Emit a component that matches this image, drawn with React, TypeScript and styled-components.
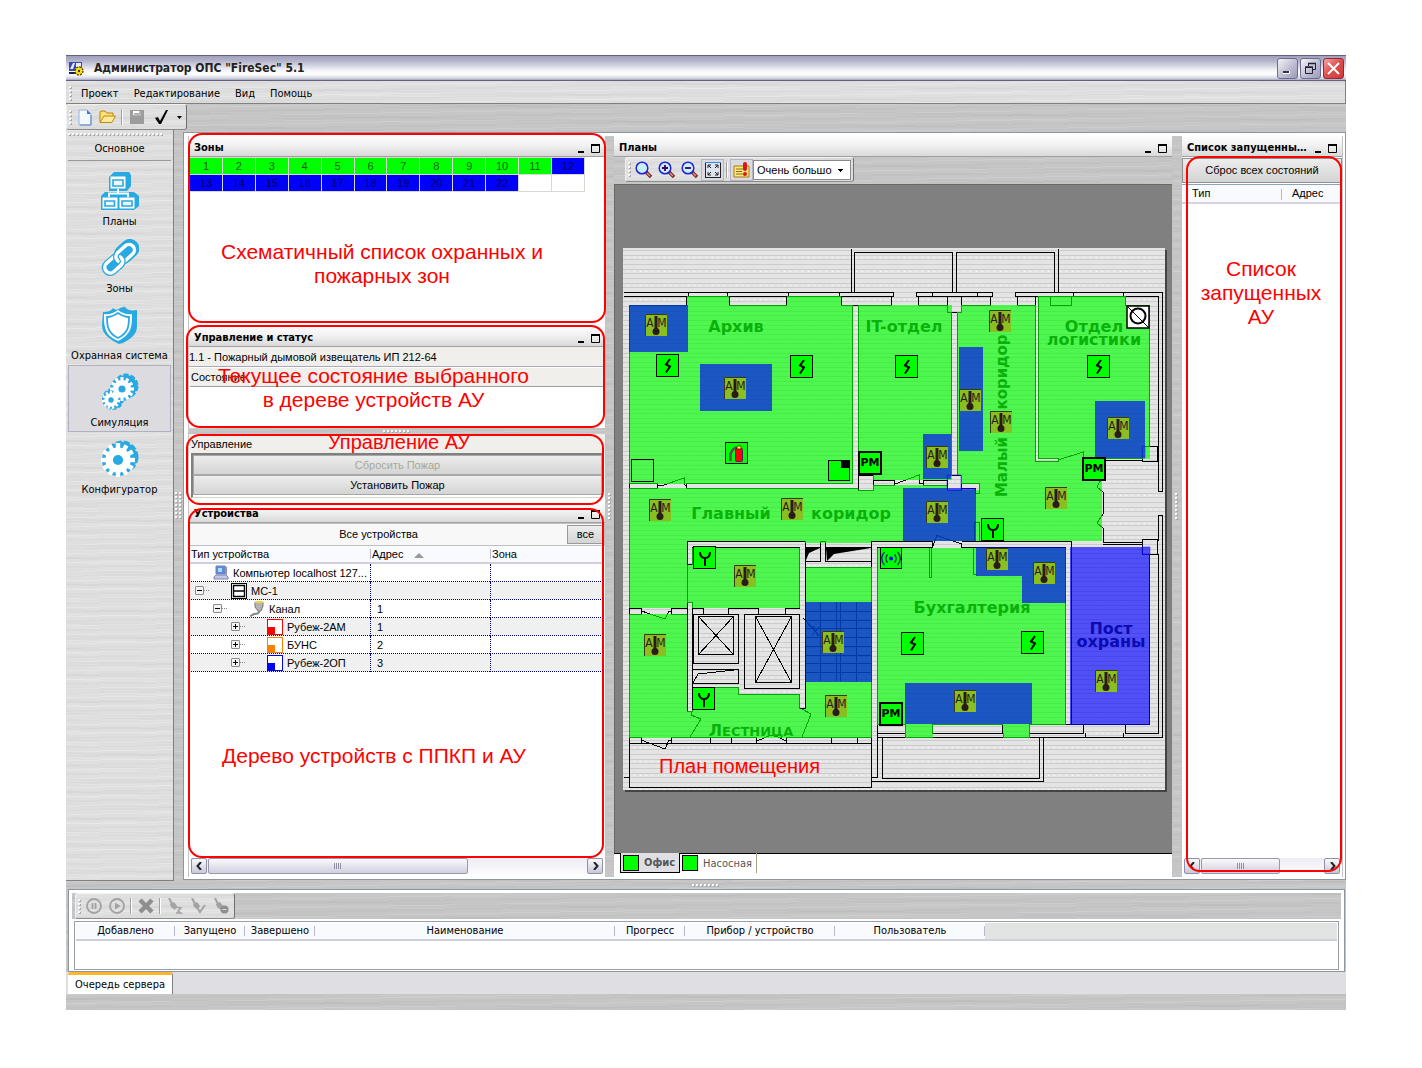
import React from 'react';
import styled, { createGlobalStyle, css } from 'styled-components';

const TAHOMA = '"DejaVu Sans Condensed", "DejaVu Sans", sans-serif';
const MS_SANS = '"Liberation Sans", Arial, sans-serif';

const lightMetal = css`
  background:
    repeating-linear-gradient(179deg, rgba(255, 255, 255, 0.22) 0 1px, transparent 1px 4px, rgba(0, 0, 0, 0.02) 4px 6px, transparent 6px 9px),
    repeating-linear-gradient(181deg, rgba(0, 0, 0, 0.02) 0 2px, transparent 2px 5px, rgba(255, 255, 255, 0.15) 5px 6px, transparent 6px 13px),
    #dfdfdf;
`;
const darkMetal = css`
  background:
    repeating-linear-gradient(179deg, rgba(255, 255, 255, 0.12) 0 1px, transparent 1px 4px, rgba(0, 0, 0, 0.02) 4px 6px, transparent 6px 9px),
    repeating-linear-gradient(181deg, rgba(0, 0, 0, 0.02) 0 2px, transparent 2px 5px, rgba(255, 255, 255, 0.08) 5px 6px, transparent 6px 13px),
    #c6c6c6;
`;

const GlobalStyle = createGlobalStyle`
  * { box-sizing: border-box; }
  body { margin: 0; background: #fff; color: #000; font: 11px/15px ${TAHOMA}; }
  button, select { font: inherit; color: inherit; padding: 0; margin: 0; }
  svg { display: block; flex: none; }
`;

const Page = styled.div`
  display: flex;
  min-height: 100vh;
  padding: 55px 76px 58px 66px;
`;
const Window = styled.div`
  display: flex;
  flex-direction: column;
  flex: 1;
  min-width: 0;
  ${darkMetal}
`;

/* ---------- window chrome ---------- */
const TitleBar = styled.header`
  display: flex;
  align-items: center;
  gap: 2px;
  height: 26px;
  padding: 0 2px;
  border-top: 1px solid #62627f;
  border-bottom: 1px solid #62627f;
  background: linear-gradient(#9f9fbc 0, #b4b4cb 20%, #f4f4f8 60%, #fff 75%, #d8d8e4 92%, #a5a5c0 100%);
`;
const WindowTitle = styled.h1`
  flex: 1;
  margin: 0 0 0 8px;
  font-size: 12px;
  line-height: 24px;
  font-weight: bold;
  color: #222;
`;
const WindowButton = styled.button<{ $danger?: boolean }>`
  display: grid;
  place-items: center;
  width: 21px;
  height: 21px;
  border: 1px solid ${(p) => (p.$danger ? '#8c2b35' : '#6b6b8e')};
  border-radius: 3px;
  background: ${(p) =>
    p.$danger ? 'linear-gradient(135deg, #f4a8a4, #dd4c4a 50%, #cf3a3c)' : 'linear-gradient(135deg, #f4f4fa, #b9b9d0 60%, #9c9cba)'};
`;
const MenuBar = styled.nav`
  display: flex;
  align-items: center;
  height: 23px;
  padding: 2px 0 0 3px;
  border-right: 1px solid #808080;
  border-bottom: 1px solid #808080;
  ${lightMetal}
`;
const MenuItem = styled.button`
  border: 0;
  background: none;
  margin-left: 8px;
  margin-right: 7px;
`;
const GripDots = styled.span<{ $across?: boolean; $length: number; $rows?: number }>`
  flex: none;
  margin-right: 1px;
  width: ${(p) => (p.$across ? p.$length : 4 * (p.$rows || 1) - 1)}px;
  height: ${(p) => (p.$across ? 3 : p.$length)}px;
  background:
    conic-gradient(from 270deg at 2px 2px, #fafafa 90deg, transparent 0) 0 0 / 4px 4px,
    conic-gradient(from 270deg at 2px 2px, #a8a8a8 90deg, transparent 0) 1px 1px / 4px 4px;
`;
const ToolStrip = styled.div`
  display: flex;
  height: 26px;
`;
const ToolGroup = styled.div`
  display: flex;
  align-items: center;
  border: 1px solid #f2f2f2;
  border-right-color: #707070;
  border-bottom-color: #8a8a8a;
  border-radius: 3px;
  padding: 0 2px;
  ${lightMetal}
`;
const ToolButton = styled.button<{ $active?: boolean; $size?: number }>`
  display: grid;
  place-items: center;
  flex: none;
  width: ${(p) => p.$size || 23}px;
  height: 22px;
  border: 1px solid ${(p) => (p.$active ? '#b4b4c2' : 'transparent')};
  background: ${(p) => (p.$active ? '#dadae0' : 'none')};
`;
const ToolDivider = styled.span`
  flex: none;
  width: 2px;
  height: 16px;
  margin: 0 2px;
  border-left: 1px solid #a0a0a0;
  border-right: 1px solid #fff;
`;

/* ---------- main area ---------- */
const Main = styled.div`
  display: flex;
  flex: 1;
  min-height: 0;
`;
const Sidebar = styled.aside`
  display: flex;
  flex-direction: column;
  flex: none;
  width: 108px;
  padding: 3px 2px 0;
  border-right: 1px solid #808080;
  border-bottom: 1px solid #808080;
  ${lightMetal}
`;
const SidebarTitle = styled.h2`
  margin: 0 0 3px;
  padding: 4px 0 2px;
  border-bottom: 1px solid #999;
  font-size: 11px;
  line-height: 18px;
  font-weight: normal;
  text-align: center;
`;
const SidebarItem = styled.button<{ $active?: boolean }>`
  display: flex;
  flex-direction: column;
  align-items: center;
  gap: 4px;
  height: 67px;
  padding-top: 7px;
  border: 1px solid ${(p) => (p.$active ? '#b0b0c0' : 'transparent')};
  background: ${(p) => (p.$active ? '#dcdce0' : 'none')};
  white-space: nowrap;
`;
const Splitter = styled.div<{ $size: number; $row?: boolean }>`
  display: grid;
  place-items: center;
  flex: none;
  ${(p) => (p.$row ? `height: ${p.$size}px;` : `width: ${p.$size}px;`)}
  ${darkMetal}
`;
const WorkArea = styled.main`
  display: flex;
  flex: 1;
  min-width: 0;
  margin: 2px 0 1px;
  padding: 3px 2px 2px 4px;
  border: 1px solid #8d969c;
  background: #fff;
`;
const Column = styled.div<{ $width?: number }>`
  display: flex;
  flex-direction: column;
  ${(p) => (p.$width ? `flex: none; width: ${p.$width}px;` : 'flex: 1; min-width: 0;')}
`;
const Panel = styled.section<{ $height?: number }>`
  position: relative;
  display: flex;
  flex-direction: column;
  ${(p) => (p.$height ? `flex: none; height: ${p.$height}px;` : 'flex: 1; min-height: 0;')}
  background: #fff;
  border-left: 1px solid #c4c4c4;
  border-right: 1px solid #c4c4c4;
`;
const PanelHeader = styled.header`
  display: flex;
  align-items: center;
  flex: none;
  height: 21px;
  padding: 4px 2px 0 5px;
  border-bottom: 1px solid #a0a0a0;
  background: linear-gradient(#fefefe, #f0f0f0 50%, #d9d9d9);
`;
const PanelTitle = styled.h2`
  flex: 1;
  min-width: 0;
  margin: 0;
  overflow: hidden;
  text-overflow: ellipsis;
  white-space: nowrap;
  font-size: 11px;
  line-height: 16px;
`;
const PanelButton = styled.button`
  display: grid;
  place-items: center;
  width: 15px;
  height: 15px;
  border: 0;
  background: none;
`;

/* ---------- callouts ---------- */
const Callout = styled.div<{ $box: string; $text: string; $compact?: boolean }>`
  position: absolute;
  z-index: 2;
  inset: ${(p) => p.$box};
  padding: ${(p) => p.$text};
  border: 2px solid #f00;
  border-radius: 14px;
  color: #f00;
  font: ${(p) => (p.$compact ? '20px/12px' : '21px/24px')} ${MS_SANS};
  text-align: center;
  pointer-events: none;
`;

/* ---------- zones ---------- */
const ZoneTable = styled.table`
  width: 396px;
  border-collapse: collapse;
  table-layout: fixed;
`;
const ZoneCell = styled.td<{ $fill: string }>`
  height: 17px;
  padding: 0;
  border: 1px solid #d8d8d0;
  background: ${(p) => p.$fill};
  color: rgba(0, 0, 0, 0.68);
  font: 11px/15px ${MS_SANS};
  text-align: center;
`;

/* ---------- status & control ---------- */
const StatusLine = styled.div`
  height: 20px;
  border-bottom: 1px solid #a9a9bb;
  background: #f0efec;
  font: 11px/20px ${MS_SANS};
  white-space: nowrap;
`;
const StatusHeading = styled.div`
  height: 19px;
  margin: 1px 1px 0;
  padding-left: 1px;
  border-bottom: 1px solid #a0a0a0;
  background: #f0efec;
  font: 11px/19px ${MS_SANS};
`;
const ControlHeading = styled.div`
  height: 19px;
  padding-left: 2px;
  background: #f0efec;
  font: 11px/20px ${MS_SANS};
`;
const ControlBox = styled.div`
  display: flex;
  flex-direction: column;
  margin: 0 2px;
  padding-bottom: 2px;
  border: 1px solid #808080;
  border-width: 2px 1px 0 2px;
  border-bottom: 1px solid #d8d8c8;
`;
const WideButton = styled.button`
  height: 20px;
  border: 1px solid;
  border-color: #fafafa #777 #777 #fafafa;
  outline: 1px solid #a8a8a8;
  outline-offset: -1px;
  background: linear-gradient(#ededed, #d4d4d4);
  font: 11px/16px ${MS_SANS};
  &:disabled { color: #a8a898; }
`;

/* ---------- device tree ---------- */
const FilterBar = styled.div`
  display: flex;
  align-items: center;
  flex: none;
  height: 23px;
  border: 1px solid #c0c0c0;
  background: #f8f8f8;
  font: 11px/15px ${MS_SANS};
`;
const FilterLabel = styled.span`
  flex: 1;
  text-align: center;
`;
const FilterButton = styled.button`
  width: 37px;
  height: 19px;
  border: 1px solid #9a9a9a;
  background: linear-gradient(#ededed, #d4d4d4);
`;
const TreeTable = styled.table`
  width: 100%;
  padding-right: 2px;
  border-collapse: separate;
  border-spacing: 0;
  table-layout: fixed;
`;
const TreeHead = styled.th`
  height: 18px;
  padding: 0 2px;
  border-bottom: 2px solid #cfcfdc;
  background: linear-gradient(90deg, #b8b8cc, #b8b8cc) 0 3px / 1px 10px no-repeat #f9fafe;
  font: 11px/16px ${MS_SANS};
  text-align: left;
  white-space: nowrap;
  &:first-child { background: #f9fafe; }
`;
const SortMark = styled.span`
  display: inline-block;
  margin-left: 7px;
  border: 5px solid transparent;
  border-top: 0;
  border-bottom-color: #999;
`;
const TreeRow = styled.tr<{ $odd: boolean }>`
  background: ${(p) => (p.$odd ? '#f0f0f0' : '#fff')};
`;
const TreeCell = styled.td`
  height: 18px;
  padding: 0 0 0 6px;
  border-bottom: 1px dotted #000080;
  border-left: 1px dotted #000080;
  font: 11px/16px ${MS_SANS};
  &:first-child { padding: 0; border-left: 0; }
`;
const TreeName = styled.div<{ $level: number }>`
  display: flex;
  align-items: center;
  height: 17px;
  padding-left: ${(p) => (p.$level ? p.$level * 18 - 12 : 24)}px;
  overflow: hidden;
  white-space: nowrap;
`;
const Expander = styled.button`
  display: grid;
  place-items: center;
  flex: none;
  width: 9px;
  height: 9px;
  border: 1px solid #8a8a8a;
  border-radius: 1px;
  background: #f4f4f4;
`;
const Branch = styled.span`
  flex: none;
  width: 5px;
  margin-right: 22px;
  border-top: 1px dotted #888;
`;
const TreeText = styled.span`
  margin-left: 4px;
`;
const Grow = styled.div`
  flex: 1;
`;

/* ---------- scroll bar ---------- */
const ScrollBar = styled.div`
  display: flex;
  flex: none;
  height: 16px;
  margin: 0 2px 3px;
  background: linear-gradient(#ececf2, #fafaff);
`;
const ScrollButton = styled.button`
  display: grid;
  place-items: center;
  width: 16px;
  border: 1px solid #8f8fa6;
  border-radius: 2px;
  background: linear-gradient(#fafafd, #c8c8d8);
`;
const ScrollThumb = styled.div<{ $width: number }>`
  display: grid;
  place-items: center;
  width: ${(p) => p.$width}px;
  margin-left: 1px;
  border: 1px solid #9a9aae;
  border-radius: 2px;
  background: linear-gradient(#fafafd, #cfcfdf);
`;

/* ---------- plan ---------- */
const PlanTools = styled(ToolStrip)`
  height: 27px;
  padding: 0 11px 2px;
  ${darkMetal}
`;
const ZoomSelect = styled.select`
  appearance: none;
  width: 98px;
  height: 20px;
  padding: 0 18px 0 3px;
  border: 1px solid #8a8a8a;
  border-radius: 0;
  background:
    linear-gradient(#000, #000) 84px 8px / 5px 1px no-repeat,
    linear-gradient(#000, #000) 85px 9px / 3px 1px no-repeat,
    linear-gradient(#000, #000) 86px 10px / 1px 1px no-repeat,
    #fff;
  font: 11px/16px ${MS_SANS};
  overflow: hidden;
  white-space: nowrap;
`;
const Canvas = styled.div`
  display: grid;
  place-items: center;
  flex: 1;
  padding-left: 1px;
  overflow: hidden;
  border: 1px solid #6a6a62;
  border-width: 1px 0 0 1px;
  background: #808080;
`;
const Paper = styled.svg`
  box-shadow: 2px 2px 0 #444;
`;
const PlanTabs = styled.div`
  display: flex;
  flex: none;
  height: 24px;
  padding-left: 6px;
  border-top: 1px solid #000;
`;
const PlanTab = styled.button<{ $active?: boolean }>`
  display: flex;
  align-items: center;
  gap: 5px;
  height: 20px;
  margin-top: -1px;
  padding: 0 4px 0 2px;
  border: 1px solid #000;
  border-top: 0;
  ${(p) => (p.$active ? 'background: #dfdfe3; font-weight: bold;' : 'border-width: 0 1px 0 0; border-color: #a8a088; padding-left: 2px; background: none;')}
  color: #555;
`;
const Swatch = styled.span`
  width: 16px;
  height: 16px;
  border: 1px solid #000;
  background: #0f0;
`;

/* ---------- launched list ---------- */
const ResetButton = styled.button`
  flex: none;
  height: 25px;
  margin: 1px 0 1px;
  border: 1px solid #909090;
  background: linear-gradient(#ededed, #d4d4d4);
  font: 11px/15px ${MS_SANS};
`;
const ListTable = styled.table`
  width: 100%;
  border-top: 1px solid #8aa4be;
  border-collapse: separate;
  border-spacing: 0;
  table-layout: fixed;
`;
const ListHead = styled.th`
  height: 18px;
  padding: 0 10px;
  border-bottom: 2px solid #d4d4e0;
  background: linear-gradient(#b8b8cc, #b8b8cc) 100% 4px / 1px 11px no-repeat #f9fafe;
  font: 11px/17px ${MS_SANS};
  text-align: left;
  &:last-child { background: #f9fafe; }
`;

/* ---------- dock ---------- */
const Dock = styled.section`
  margin: 0 1px 0 2px;
  padding: 3px 3px 1px;
  border: 1px solid #8d969c;
  background: #fff;
`;
const DockTools = styled(ToolStrip)`
  padding-left: 3px;
  ${darkMetal}
`;
const QueueBox = styled.div`
  height: 49px;
  margin: 2px 2px 0;
  padding: 1px;
  border: 1px solid #9a9fa6;
`;
const QueueTable = styled.table`
  width: 100%;
  border-collapse: separate;
  border-spacing: 0;
  table-layout: fixed;
`;
const QueueHead = styled.th`
  height: 18px;
  padding: 0;
  border-bottom: 2px solid #cfcfdc;
  background: linear-gradient(#b8b8cc, #b8b8cc) 100% 3px / 1px 10px no-repeat #f9fafe;
  font-weight: normal;
  line-height: 16px;
  &:last-child { background: #e2e3e3; }
`;
const DockTabs = styled.div`
  display: flex;
  height: 22px;
  padding-left: 2px;
  background: #dfdfe3;
`;
const DockTab = styled.button`
  padding: 0 7px;
  border: 0;
  border-top: 3px solid #ffb62e;
  border-right: 1px solid #808080;
  border-radius: 3px 3px 0 0;
  background: #fff;
`;
const StatusBar = styled.footer`
  height: 16px;
  ${darkMetal}
`;

/* ---------- icons ---------- */
const BLUE = '#29a9e1';

const AppIcon = () => (
  <svg width="16" height="16" viewBox="0 0 16 16">
    <path d="M1 2h13v9H1z" fill="#3848b8" />
    <path d="M2 9l3-6h2L5 9zM8 3h5v4H8z" fill="#e8ecff" />
    <path d="M1 12h7v2H1z" fill="#1a2050" />
    <circle cx="11" cy="11" r="4" fill="#ffe21a" stroke="#5c4c00" strokeDasharray="2 1.1" strokeWidth="1.4" />
    <circle cx="11" cy="11" r="1.2" fill="#403400" />
  </svg>
);
const PlansIcon = () => (
  <svg width="38" height="38" viewBox="0 0 38 38">
    <path d="M8 5l5-5h15l2 3v11l-4 5H8z" fill={BLUE} />
    <path d="M0 24l4-4h29l5 4v10l-5 4H0z" fill={BLUE} />
    <path d="M17 17v4M8 25v-3.500h19V25" fill="none" stroke="#fff" strokeWidth="1.800" />
    <path d="M9.500 4.500h15v12h-15zM1.500 25.500h15v11h-15zM18.500 25.500h15v11h-15z" fill="#fff" />
    <path d="M12 8h10v6H12zM4 29h9.500v5H4zM21 29h10v5H21z" fill="#f0f8fd" stroke={BLUE} strokeWidth="1.600" />
  </svg>
);
const LinkIcon = () => (
  <svg width="38" height="38" viewBox="0 0 38 38">
    <g transform="rotate(-42 19 19)" fill="none">
      <rect x="-3" y="11" width="25" height="17" rx="8" fill={BLUE} />
      <rect x="15" y="9" width="27" height="19" rx="9" fill={BLUE} />
      <rect x="0" y="14" width="20" height="11" rx="5.500" stroke="#fff" strokeWidth="3.500" />
      <rect x="15.500" y="13.500" width="21" height="11" rx="5.500" stroke={BLUE} strokeWidth="6" />
      <rect x="15.500" y="13.500" width="21" height="11" rx="5.500" stroke="#fff" strokeWidth="3.500" />
      <path d="M12 25h3a5 5 0 0 0 5-5" stroke={BLUE} strokeWidth="6" />
      <path d="M10 25h5a5 5 0 0 0 5-5.500" stroke="#fff" strokeWidth="3.500" />
    </g>
  </svg>
);
const ShieldIcon = () => (
  <svg width="38" height="38" viewBox="0 0 38 38">
    <path d="M2 6c5 0 8-1 10-4 2 2 5 2 7 0 2 0 3-2 5-1 2 3 6 4 12 3v16c0 9-7 13-14 17l-4 1C10 34 1 29 1 19z" fill={BLUE} />
    <path d="M3 8c5 1 10-1 14-4 4 3 9 5 14 4 0 12 0 20-14 27C3 29 3 20 3 8z" fill="#fff" />
    <path d="M6 11c4 0 8-2 11-4 3 2 7 4 11 4 0 10-1 16-11 21C7 27 6 21 6 11z" fill="#fff" stroke={BLUE} strokeWidth="1.800" />
  </svg>
);
const Gear = ({ x, y, r, teeth }: { x: number; y: number; r: number; teeth: number }) => (
  <g>
    <circle cx={x} cy={y} r={r * 0.74} fill="#fff" />
    {Array.from({ length: teeth }, (_, i) => (
      <rect key={i} x={x - r * 0.13} y={y - r} width={r * 0.26} height={r * 0.4} fill="#fff" transform={`rotate(${(360 / teeth) * i} ${x} ${y})`} />
    ))}
    <circle cx={x} cy={y} r={r * 0.3} fill={BLUE} />
  </g>
);
const GearsIcon = () => (
  <svg width="38" height="38" viewBox="0 0 38 38">
    <circle cx="25" cy="13" r="11" fill={BLUE} stroke={BLUE} strokeWidth="3" strokeDasharray="5 2" />
    <circle cx="21" cy="16" r="12" fill={BLUE} />
    <circle cx="12" cy="26" r="10" fill={BLUE} stroke={BLUE} strokeWidth="2" strokeDasharray="4 2" />
    <Gear x={21} y={16} r={12} teeth={12} />
    <Gear x={10} y={27} r={9} teeth={11} />
  </svg>
);
const GearIcon = () => (
  <svg width="38" height="38" viewBox="0 0 38 38">
    <circle cx="21" cy="17" r="15" fill={BLUE} stroke={BLUE} strokeWidth="3" strokeDasharray="6 2" />
    <circle cx="17" cy="20" r="16" fill={BLUE} />
    <Gear x={17} y={20} r={17} teeth={12} />
  </svg>
);
const NewIcon = () => (
  <svg width="14" height="17" viewBox="0 0 14 17">
    <path d="M1 1h8l4 4v11H1z" fill="#f4f9ff" stroke="#8fb4e0" />
    <path d="M9 1v4h4z" fill="#3d7cc8" />
    <path d="M13 6v10H2" fill="none" stroke="#5c8cc8" />
  </svg>
);
const FolderIcon = () => (
  <svg width="17" height="14" viewBox="0 0 17 14">
    <path d="M1 12V2l1-1h4l2 2h6v3" fill="#ffdf7a" stroke="#b8860b" />
    <path d="M1 12.500L5 6h11.500L13 12.500z" fill="#ffe99a" stroke="#c08a10" />
  </svg>
);
const SaveIcon = () => (
  <svg width="14" height="14" viewBox="0 0 14 14">
    <path d="M0 0h14v14H0z" fill="#9c9c9c" />
    <path d="M3 1h8v5H3z" fill="#b4b4b4" />
    <path d="M3 1h6v2H4v2H3z" fill="#fff" />
  </svg>
);
const CheckIcon = () => (
  <svg width="15" height="14" viewBox="0 0 15 14">
    <path d="M1 8l3-1 2 4L12 0h2L7 14H5z" fill="#000" />
  </svg>
);
const DownIcon = () => (
  <svg width="5" height="3" viewBox="0 0 5 3"><path d="M0 0h5L2.500 3z" /></svg>
);
const LensIcon = ({ sign }: { sign?: string }) => (
  <svg width="18" height="18" viewBox="0 0 18 18">
    <path d="M11 11l5 5" stroke="#7a2a2a" strokeWidth="3.500" />
    <path d="M12 12l3 3" stroke="#d89080" strokeWidth="1.500" />
    <circle cx="7" cy="7" r="5.800" fill="#c8f0fa" stroke="#2222d8" strokeWidth="1.500" />
    {sign && <path d={sign} stroke="#400060" strokeWidth="1.800" />}
  </svg>
);
const FitIcon = () => (
  <svg width="16" height="16" viewBox="0 0 16 16">
    <rect x=".5" y=".5" width="15" height="15" fill="#dce4f0" stroke="#222" />
    <path d="M0 .5h16" stroke="#2a8af0" />
    <path d="M3 6V3h3M10 3h3v3M13 10v3h-3M6 13H3v-3M3 3l3 3M13 3l-3 3M13 13l-3-3M3 13l3-3" fill="none" stroke="#222" />
  </svg>
);
const NoteIcon = () => (
  <svg width="17" height="16" viewBox="0 0 17 16">
    <path d="M1 4h15v11H1z" fill="#ffe87a" stroke="#a87a10" />
    <path d="M3 7h7M3 9.500h6M3 12h7" stroke="#8a6a20" />
    <rect x="10" y="0" width="4" height="9" rx="2" fill="#d81818" />
    <circle cx="12" cy="12" r="2" fill="#d81818" />
  </svg>
);
const GREY = '#a2a2a2';
const PauseIcon = () => (
  <svg width="16" height="16" viewBox="0 0 16 16" fill="none" stroke={GREY}>
    <circle cx="8" cy="8" r="7" strokeWidth="1.800" /><path d="M6.500 5v6M9.500 5v6" strokeWidth="1.800" />
  </svg>
);
const PlayIcon = () => (
  <svg width="16" height="16" viewBox="0 0 16 16" fill="none" stroke={GREY}>
    <circle cx="8" cy="8" r="7" strokeWidth="1.800" /><path d="M6 4.500L11.500 8 6 11.500z" fill={GREY} stroke="none" />
  </svg>
);
const CrossIcon = () => (
  <svg width="16" height="16" viewBox="0 0 16 16"><path d="M2 2l12 12M14 2L2 14" stroke="#8e8e8e" strokeWidth="4.500" /></svg>
);
const BroomIcon = ({ extra }: { extra: React.ReactNode }) => (
  <svg width="16" height="16" viewBox="0 0 16 16">
    <path d="M2 0l3 6" stroke={GREY} strokeWidth="2" /><path d="M3 6l4-2 3 4-2 4-4-3z" fill={GREY} />{extra}
  </svg>
);
const ComputerIcon = () => (
  <svg width="16" height="16" viewBox="0 0 16 16">
    <path d="M3 1h9v8H3z" fill="#5a8ae0" stroke="#7a80b0" /><path d="M5 3h4v4H5z" fill="#a8dcff" />
    <path d="M12 1l2 1v8l-2-1z" fill="#8a90c0" /><path d="M1 12l2-2h10l2 2v2H1z" fill="#c4c8e4" stroke="#7a80b0" />
  </svg>
);
const McIcon = () => (
  <svg width="16" height="16" viewBox="0 0 16 16">
    <rect x=".5" y=".5" width="15" height="15" fill="#fff" stroke="#000" /><path d="M2.500 2.500h11v11h-11zM2.500 8h11" fill="none" stroke="#000" strokeWidth="1.400" />
  </svg>
);
const PlugIcon = () => (
  <svg width="16" height="16" viewBox="0 0 16 16">
    <path d="M6 1h8v4l-2 5H9L6 6z" fill="#b4b4b4" stroke="#777" /><path d="M6 1h8" stroke="#f0d840" strokeWidth="2" />
    <path d="M10 10c0 4-3 2-5 3s-2 2-4 2" fill="none" stroke="#888" strokeWidth="2" />
  </svg>
);
const DeviceIcon = ({ color }: { color: string }) => (
  <svg width="16" height="16" viewBox="0 0 16 16">
    <rect x=".5" y=".5" width="15" height="15" fill="#fff" stroke={color} /><path d="M0 8h8v8H0z" fill={color} />
  </svg>
);

/* ---------- shared parts ---------- */
function PanelTop({ title }: { title: string }) {
  return (
    <PanelHeader>
      <PanelTitle>{title}</PanelTitle>
      <PanelButton aria-label="Свернуть">
        <svg width="9" height="9" viewBox="0 0 9 9"><path d="M2 7h6v2H2z" /></svg>
      </PanelButton>
      <PanelButton aria-label="Развернуть">
        <svg width="9" height="9" viewBox="0 0 9 9"><path d="M.5 1h8v7.500h-8z" fill="none" stroke="#000" /><path d="M0 0h9v2H0z" /></svg>
      </PanelButton>
    </PanelHeader>
  );
}
function Scroll({ thumb }: { thumb: number }) {
  return (
    <ScrollBar>
      <ScrollButton aria-label="Влево">
        <svg width="7" height="8" viewBox="0 0 7 8"><path d="M5 0L1.500 4 5 8" fill="none" stroke="#222" strokeWidth="2" /></svg>
      </ScrollButton>
      <ScrollThumb $width={thumb}>
        <svg width="8" height="6" viewBox="0 0 8 6"><path d="M.5 0v6M2.500 0v6M4.500 0v6M6.500 0v6" stroke="#9090a8" /></svg>
      </ScrollThumb>
      <Grow />
      <ScrollButton aria-label="Вправо">
        <svg width="7" height="8" viewBox="0 0 7 8"><path d="M2 0l3.500 4L2 8" fill="none" stroke="#222" strokeWidth="2" /></svg>
      </ScrollButton>
    </ScrollBar>
  );
}

/* ---------- floor plan ---------- */
const WALLS = [
  // balconies at the top
  'M851.500 249V292M854.500 292V252.500H952.500V292M956.500 292V252.500H1054.500V292M1058.500 249V292',
  // top outer wall
  'M624 292.500H893.500V296.500H624M688.500 292V296M727.500 292V296M788.500 292V296M839.500 292V296',
  'M916.500 292.500H992.500V296.500H916.500ZM932.500 292V296M977.500 292V296',
  'M1015.500 292.500H1162.500V491.500H1158.500V296.500H1015.500ZM1073.500 292V296M1123.500 292V296',
  // windows
  'M686.500 296V305.500H629M729.500 296.500V305.500H786.500V296.500M841.500 296.500V305.500H891.500V296.500',
  'M918.500 296.500V305.500H947.500M961.500 305.500H990.500V296.500M1017.500 296.500V305.500H1035.500M1050.500 296.500V305.500H1071.500V296.500M1125.500 296.500V305.500H1149.500',
  // archive
  'M629.500 305V483.500M852.500 305V483.500H686.500V488.500H858.500M852.500 305.500H858.500V475M629.500 483.500H657.500V488.500H629.500Z',
  'M658 486L664 485 684 478V484L686 486',
  // pillars
  'M858.500 475.500H873.500V490.500H858.500ZM947.500 296.500V312.500H961.500V296.500M947.500 475.500H961.500V490.500H947.500ZM1142.500 446.500H1157.500V461.500H1142.500Z',
  'M873.500 480.500H894.500V485.500H873.500M947 480.500H923.500V485.500H947M895 484L919 475V483L923 484',
  'M951.500 312V475M957.500 312V475M961 483.500H979.500V493.500H975.500V488.500H961',
  // logistics
  'M1035.500 296V461.500H1058.500V458.500H1038.500V296M1149.500 305V446M1106 458.500H1142M1106 460.500H1142M1058 460L1083 452V456L1085 458',
  'M1102 478L1097 487 1103 492V514L1097 523 1103 528V542.500H1142M1103 544.500H1142',
  'M1158.500 541V515.500H1162.500V737.500H877.500M1158.500 554V733.500H1125.500V724.500H1149.500V554M1142.500 539.500H1157.500V554.500H1142.500Z',
  // middle wall
  'M692.500 564.500H687.500V541.500H805.500M692.500 564V547.500H799.500V608.500M805.500 541V608M805.500 561.500H820.500V541.500H825.500V561.500H871.500M871.500 737V541.500H932.500V547.500H877.500V777.500H871.500M805.500 567.500H871.500M825.500 547.500H871M805.500 547.500H820',
  'M932.500 547L937 535.500 961.500 544V547.500H1065.500V724.500M961.500 541.500H1071.500V724.500M974.500 541V522.500H979.500V541',
  'M929.500 547V577.500H931.500V547M973.500 547V574.500H976.500',
  // accounting, lower walls
  'M877.500 724.500H905.500V733.500H877.500M905.500 733V737M932.500 724.500H1002.500V733.500H932.500ZM1029.500 724.500H1083.500V733.500H1029.500M1003.500 733V737M1029.500 724V737M1085.500 733V737M1123.500 737V733M1071 724.500H1149',
  // lift shafts
  'M687.500 541V711.500H692.500V602.500H687.500M629.500 608.500H641.500V614.500H629.500M687 608.500H671.500V614.500H687M641.500 611L665 619 669 611H671',
  'M692.500 608.500H703.500V614M728.500 614V608.500H758.500V614M785.500 614V608.500H799.500M692.500 614.500H738.500V663.500H692.500ZM744.500 614.500H799.500V688.500H744.500ZM693.500 614V663',
  'M698.500 616.500H733.500V654.500H698.500ZM698.500 616.500L733.500 654.500M733.500 616.500L698.500 654.500M755.500 616.500H791.500V682.500H755.500ZM755.500 616.500L791.500 682.500M791.500 616.500L755.500 682.500',
  'M692.500 683.500H738.500V669.500H692.500V683.500L698 674 734 670M692.500 687.500H738.500V694.500H799.500V708.500H805.500V608',
  'M691 712V715L701 719 690 737M802 709L811 714 802 737',
  // stairwell and entrance
  'M629.500 488V743.500M629.500 737.500H641.500V743.500M671.500 743.500V737.500H756.500V743.500H671.500M786.500 743.500V737.500H871.500V743.500H786.500M710.500 737V743M731.500 737V743M831.500 737V743M857.500 737V743M641 740L665 749 669 740H671M757 741L771 735 778 737 786 741',
  'M629.500 743.500H871.500V787.500H629.500ZM624 777.500H629M871.500 781.500H1043.500V737.500M882.500 737.500V778.500H1039.500V737.500',
  // stairs
  'M806 611.500H871M806 620.500H871M806 628.500H871M806 637.500H871M806 646.500H871M806 655.500H871M806 663.500H871M806 672.500H871M820.500 602V681M836.500 602V681M840.500 602V681M856.500 602V681',
  'M803 618L817 633 822 638M812 635L820 626M813 626L818 636',
];
const GREEN_ZONES = [
  'M629 305H687V296H729V305H787V296H841V305H853V484H629Z',
  'M858 305H952V480H873V475H858Z',
  'M957 312H961V305H1036V461H1102V541H979V484H961V475H957Z',
  'M1038 296H1126V305H1150V459H1038Z',
  'M629 488H858V490H873V485H947V490H979V541H871V543H805V541H687V565H692V548H800V608H692V603H687V608H629Z',
  'M629 614H687V711H692V687H739V694H800V709H806V567H872V738H629Z',
  'M877 548H1066V725H1030V738H1003V725H933V738H905V725H877Z',
  'M1058 459H1083V461H1058Z',
];
const BLUE_ZONES: [number, number, number, number][] = [
  [629, 305, 59, 47], [700, 364, 72, 47], [923, 434, 28, 45], [959, 347, 24, 104], [1095, 401, 50, 57],
  [903, 488, 73, 53], [976, 547, 46, 29], [1022, 547, 44, 56], [905, 683, 127, 41], [805, 602, 67, 80], [1070, 547, 80, 178],
];
const ROOM_LABELS: [string, number, number][] = [
  ['Архив', 736, 332], ['IT-отдел', 904, 332], ['Отдел', 1094, 332], ['логистики', 1094, 345], ['Главный', 731, 519],
  ['коридор', 851, 519], ['Бухгалтерия', 972, 613], ['Пост', 1111, 634], ['охраны', 1111, 647],
];
const HEAT_SENSORS: [number, number][] = [
  [645, 314], [724, 377], [926, 446], [989, 310], [959, 389], [990, 411], [1107, 417], [1045, 487], [649, 499], [781, 498],
  [734, 565], [644, 634], [822, 631], [825, 695], [926, 501], [986, 548], [1033, 562], [954, 690], [1095, 670],
];
const SMOKE_SENSORS: [number, number][] = [[656, 354], [790, 355], [895, 355], [1087, 355], [901, 632], [1021, 631]];
const SIRENS: [number, number][] = [[693, 546], [692, 687], [981, 518]];
const RELAYS: [number, number][] = [[858, 451], [1082, 457], [879, 702]];

const SvgLabel = styled.text<{ $size?: number }>`
  font: bold ${(p) => p.$size || 16}px "DejaVu Sans", sans-serif;
  text-anchor: middle;
  fill: #222;
`;
const SensorLetter = styled.text`
  font: 12px "DejaVu Sans Condensed", sans-serif;
  text-anchor: middle;
  fill: #2a1a1a;
`;
const RelayLetters = styled.text`
  font: bold 11px "DejaVu Sans", sans-serif;
  text-anchor: middle;
`;
const PlanCaption = styled.text`
  font: 20px ${MS_SANS};
  fill: #f00;
`;

function FloorPlan() {
  return (
    <Paper width="542" height="542" viewBox="623 248 542 542" role="img" aria-label="Офис">
      <defs>
        <pattern id="paper" x="623" y="248" width="24" height="14" patternUnits="userSpaceOnUse">
          <path d="M0 0H24V14H0Z" fill="#e4e4e4" />
          <path d="M0 2.500H24M0 7.500H24M0 11.500H24" stroke="#cccccc" />
          <path d="M5 9.500h1M11 9.500h1M17 9.500h1M23 9.500h1" stroke="#fff" />
        </pattern>
      </defs>
      <path d="M623 248H1165V790H623Z" fill="url(#paper)" />
      <path d="M806 548H820L809 553 806 560ZM826 548H871L840 553 834 554 827 561Z" />
      <path d={WALLS.join('')} fill="none" stroke="#000" shapeRendering="crispEdges" />
      {ROOM_LABELS.map(([text, x, y]) => <SvgLabel key={text + y} x={x} y={y}>{text}</SvgLabel>)}
      <SvgLabel $size={15} transform="translate(1007 372) rotate(-90)">коридор</SvgLabel>
      <SvgLabel $size={15} transform="translate(1007 467) rotate(-90)">Малый</SvgLabel>
      <SvgLabel x="751" y="736">Л<tspan fontSize="13">ЕСТНИЦА</tspan></SvgLabel>
      <path d={GREEN_ZONES.join('')} fill="#0f0" opacity=".65" />
      {BLUE_ZONES.map(([x, y, w, h]) => <rect key={`${x}-${y}`} x={x} y={y} width={w} height={h} fill="#00f" opacity=".65" />)}
      <path d="M947 475H961V490H947ZM1142 446H1145V458H1142ZM1142 547H1150V554H1142Z" fill="none" stroke="#22f" opacity=".5" />

      {HEAT_SENSORS.map(([x, y]) => (
        <g key={`${x}-${y}`} transform={`translate(${x} ${y})`}>
          <path d="M0 0H22V22H0Z" fill="#8abf22" />
          <path d="M.5 22V.5H22" fill="none" stroke="#3a3a10" />
          <SensorLetter x="5" y="13">А</SensorLetter>
          <SensorLetter x="17" y="13">М</SensorLetter>
          <path d="M9.500 2h3v14h-3z" fill="#2a1a1a" />
          <circle cx="11" cy="17.500" r="3.500" fill="#2a1a1a" />
        </g>
      ))}
      {SMOKE_SENSORS.map(([x, y]) => (
        <g key={`${x}-${y}`} transform={`translate(${x} ${y})`}>
          <rect x=".5" y=".5" width="22" height="22" fill="#0f0" stroke="#000" />
          <path d="M14 5L10 10.500l4 2L10 18.500" fill="none" stroke="#000" strokeWidth="2" />
        </g>
      ))}
      {SIRENS.map(([x, y]) => (
        <g key={`${x}-${y}`} transform={`translate(${x} ${y})`}>
          <rect x=".5" y=".5" width="22" height="22" fill="#0f0" stroke="#000" />
          <path d="M7 6c0 4 2 6 5 6s5-2 5-6M12 12v8" fill="none" stroke="#000" strokeWidth="2" />
        </g>
      ))}
      {RELAYS.map(([x, y]) => (
        <g key={`${x}-${y}`} transform={`translate(${x} ${y})`}>
          <rect x="1" y="1" width="22" height="22" fill="#0f0" stroke="#000" strokeWidth="2" />
          <RelayLetters x="12" y="15">PM</RelayLetters>
        </g>
      ))}
      <g transform="translate(725 442)">
        <rect x=".5" y=".5" width="22" height="21" fill="#0f0" stroke="#000" />
        <path d="M5.500 19v-7l2-4 4-3" fill="none" stroke="#555" strokeWidth="2.500" />
        <rect x="10.500" y="6.500" width="7" height="13" rx="1" fill="#f00" stroke="#502060" />
        <path d="M12 4h4v3h-4z" fill="#ff0" stroke="#000" strokeWidth=".6" />
      </g>
      <rect x="631.500" y="459.500" width="22" height="22" fill="none" stroke="#000" />
      <rect x="828.500" y="460.500" width="21" height="20" fill="#0f0" stroke="#000" />
      <path d="M841 460h9v8h-9z" />
      <g transform="translate(880 547)">
        <rect x=".5" y=".5" width="21" height="21" fill="#0f0" stroke="#000" />
        <circle cx="11" cy="11.500" r="2" fill="#00f" />
        <path d="M7.500 7.500a6 6 0 0 0 0 8M4.500 5a9 9 0 0 0 0 13M14.500 7.500a6 6 0 0 1 0 8M17.500 5a9 9 0 0 1 0 13" fill="none" stroke="#0a3a6a" strokeWidth="1.500" />
      </g>
      <g transform="translate(1126 305)">
        <rect x="1" y="1" width="22" height="22" fill="#fff" stroke="#000" strokeWidth="1.500" />
        <circle cx="12" cy="11" r="7.500" fill="none" stroke="#000" strokeWidth="2" />
        <path d="M2 2l20 20" stroke="#000" />
      </g>
      <PlanCaption x="659" y="773">План помещения</PlanCaption>
    </Paper>
  );
}

/* ---------- data ---------- */
const MENU = ['Проект', 'Редактирование', 'Вид', 'Помощь'];
const SECTIONS = [
  { label: 'Планы', icon: <PlansIcon /> },
  { label: 'Зоны', icon: <LinkIcon /> },
  { label: 'Охранная система', icon: <ShieldIcon /> },
  { label: 'Симуляция', icon: <GearsIcon />, active: true },
  { label: 'Конфигуратор', icon: <GearIcon /> },
];
const DEVICES = [
  { name: 'Компьютер localhost 127...', level: 0, address: '', icon: <ComputerIcon /> },
  { name: 'МС-1', level: 1, address: '', open: true, icon: <McIcon /> },
  { name: 'Канал', level: 2, address: '1', open: true, icon: <PlugIcon /> },
  { name: 'Рубеж-2АМ', level: 3, address: '1', icon: <DeviceIcon color="#f00" /> },
  { name: 'БУНС', level: 3, address: '2', icon: <DeviceIcon color="#ff8000" /> },
  { name: 'Рубеж-2ОП', level: 3, address: '3', icon: <DeviceIcon color="#00f" /> },
];
const QUEUE: [string, number][] = [
  ['Добавлено', 99], ['Запущено', 70], ['Завершено', 70], ['Наименование', 300], ['Прогресс', 70], ['Прибор / устройство', 150], ['Пользователь', 150],
];
const zoneFill = (n: number) => (n > 22 ? '#fff' : n > 11 ? '#00f' : '#0f0');

export default function App() {
  return (
    <Page>
      <GlobalStyle />
      <Window>
        <TitleBar>
          <AppIcon />
          <WindowTitle>Администратор ОПС "FireSec" 5.1</WindowTitle>
          <WindowButton aria-label="Свернуть">
            <svg width="13" height="13" viewBox="0 0 13 13"><path d="M2 9h7v3H2z" fill="#fff" /><path d="M2 9h6v2H2z" fill="#334" /></svg>
          </WindowButton>
          <WindowButton aria-label="Восстановить">
            <svg width="13" height="13" viewBox="0 0 13 13"><path d="M4.500 4V1.500h7v6H9M1.500 5.500h7v6h-7z" fill="none" stroke="#223" /><path d="M1 5h8M4 1.500h8" stroke="#223" strokeWidth="1.500" /></svg>
          </WindowButton>
          <WindowButton aria-label="Закрыть" $danger>
            <svg width="13" height="13" viewBox="0 0 13 13"><path d="M1 1l11 11M12 1L1 12" stroke="#fff" strokeWidth="2" /></svg>
          </WindowButton>
        </TitleBar>
        <MenuBar>
          <GripDots $length={15} />
          {MENU.map((m) => <MenuItem key={m}>{m}</MenuItem>)}
        </MenuBar>
        <ToolStrip>
          <ToolGroup>
            <GripDots $length={15} />
            <ToolButton aria-label="Создать"><NewIcon /></ToolButton>
            <ToolButton aria-label="Открыть"><FolderIcon /></ToolButton>
            <ToolDivider />
            <ToolButton aria-label="Сохранить"><SaveIcon /></ToolButton>
            <ToolButton aria-label="Проверить" $size={26}><CheckIcon /></ToolButton>
            <ToolButton aria-label="Ещё" $size={10}><DownIcon /></ToolButton>
          </ToolGroup>
        </ToolStrip>

        <Main>
          <Sidebar>
            <GripDots $across $length={96} />
            <SidebarTitle>Основное</SidebarTitle>
            {SECTIONS.map((s) => <SidebarItem key={s.label} $active={s.active}>{s.icon}{s.label}</SidebarItem>)}
          </Sidebar>
          <Splitter $size={9}><GripDots $length={27} $rows={2} /></Splitter>

          <WorkArea>
            <Column $width={418}>
              <Panel $height={190}>
                <PanelTop title="Зоны" />
                <ZoneTable>
                  <tbody>
                    {[0, 12].map((start) => (
                      <tr key={start}>
                        {Array.from({ length: 12 }, (_, i) => start + i + 1).map((n) => (
                          <ZoneCell key={n} $fill={zoneFill(n)}>{n <= 22 ? n : ''}</ZoneCell>
                        ))}
                      </tr>
                    ))}
                  </tbody>
                </ZoneTable>
                <Callout $box="-3px -1px 3px -1px" $text="105px 30px 0 0">Схематичный список охранных и<br />пожарных зон</Callout>
              </Panel>
              <Panel $height={102}>
                <PanelTop title="Управление и статус" />
                <StatusLine>1.1 - Пожарный дымовой извещатель ИП 212-64</StatusLine>
                <StatusHeading>Состояние</StatusHeading>
                <Callout $box="-1px 0 0 -3px" $text="37px 44px 0 0">Текущее состояние выбранного<br />в дереве устройств АУ</Callout>
              </Panel>
              <Splitter $size={6} $row><GripDots $across $length={28} /></Splitter>
              <Panel $height={68}>
                <ControlHeading>Управление</ControlHeading>
                <ControlBox>
                  <WideButton disabled>Сбросить Пожар</WideButton>
                  <WideButton>Установить Пожар</WideButton>
                </ControlBox>
                <Callout $box="0 1px -3px -3px" $text="0 0 0 8px" $compact>Управление АУ</Callout>
              </Panel>
              <Panel>
                <PanelTop title="Устройства" />
                <FilterBar>
                  <FilterLabel>Все устройства</FilterLabel>
                  <FilterButton>все</FilterButton>
                </FilterBar>
                <TreeTable>
                  <colgroup><col width="181" /><col width="120" /><col /></colgroup>
                  <thead>
                    <tr>
                      <TreeHead>Тип устройства</TreeHead>
                      <TreeHead>Адрес <SortMark /></TreeHead>
                      <TreeHead>Зона</TreeHead>
                    </tr>
                  </thead>
                  <tbody>
                    {DEVICES.map((d, i) => (
                      <TreeRow key={d.name} $odd={i % 2 === 1}>
                        <TreeCell>
                          <TreeName $level={d.level}>
                            {d.level > 0 && (
                              <>
                                <Expander aria-label={d.open ? 'Свернуть ветвь' : 'Раскрыть ветвь'}>
                                  <svg width="5" height="5" viewBox="0 0 5 5"><path d={d.open ? 'M0 2.500h5' : 'M0 2.500h5M2.500 0v5'} stroke="#000" /></svg>
                                </Expander>
                                <Branch />
                              </>
                            )}
                            {d.icon}
                            <TreeText>{d.name}</TreeText>
                          </TreeName>
                        </TreeCell>
                        <TreeCell>{d.address}</TreeCell>
                        <TreeCell />
                      </TreeRow>
                    ))}
                  </tbody>
                </TreeTable>
                <Grow />
                <Scroll thumb={260} />
                <Callout $box="6px 1px 19px -1px" $text="234px 44px 0 0">Дерево устройств с ППКП и АУ</Callout>
              </Panel>
            </Column>
            <Splitter $size={7}><GripDots $length={27} /></Splitter>

            <Column>
              <Panel>
                <PanelTop title="Планы" />
                <PlanTools>
                  <ToolGroup>
                    <GripDots $length={15} />
                    <ToolButton aria-label="Масштаб"><LensIcon /></ToolButton>
                    <ToolButton aria-label="Увеличить"><LensIcon sign="M4 7h6M7 4v6" /></ToolButton>
                    <ToolButton aria-label="Уменьшить"><LensIcon sign="M4 7h6" /></ToolButton>
                    <ToolButton aria-label="Вписать" $active><FitIcon /></ToolButton>
                    <ToolDivider />
                    <ToolButton aria-label="Подсказки" $active><NoteIcon /></ToolButton>
                    <ZoomSelect aria-label="Размер значков" defaultValue="xl">
                      <option value="xl">Очень большой</option>
                    </ZoomSelect>
                  </ToolGroup>
                </PlanTools>
                <Canvas><FloorPlan /></Canvas>
                <PlanTabs>
                  <PlanTab $active><Swatch />Офис</PlanTab>
                  <PlanTab><Swatch />Насосная</PlanTab>
                </PlanTabs>
              </Panel>
            </Column>
            <Splitter $size={8}><GripDots $length={27} /></Splitter>

            <Column $width={162}>
              <Panel>
                <PanelTop title="Список запущенных АУ" />
                <ResetButton>Сброс всех состояний</ResetButton>
                <ListTable>
                  <colgroup><col width="100" /><col /></colgroup>
                  <thead><tr><ListHead>Тип</ListHead><ListHead>Адрес</ListHead></tr></thead>
                </ListTable>
                <Grow />
                <Scroll thumb={79} />
                <Callout $box="20px 0 5px 4px" $text="99px 8px 0 2px">Список запущенных АУ</Callout>
              </Panel>
            </Column>
          </WorkArea>
        </Main>

        <Splitter $size={8} $row><GripDots $across $length={28} /></Splitter>
        <Dock>
          <DockTools>
            <ToolGroup>
              <GripDots $length={15} />
              <ToolButton aria-label="Пауза" disabled><PauseIcon /></ToolButton>
              <ToolButton aria-label="Пуск" disabled><PlayIcon /></ToolButton>
              <ToolDivider />
              <ToolButton aria-label="Удалить" disabled><CrossIcon /></ToolButton>
              <ToolDivider />
              <ToolButton aria-label="Очистить" disabled><BroomIcon extra={<path d="M8 9l6 1-3 3 3 2H9" fill="none" stroke={GREY} strokeWidth="1.500" />} /></ToolButton>
              <ToolButton aria-label="Очистить выполненные" disabled><BroomIcon extra={<path d="M8 11l2 3 5-7" fill="none" stroke={GREY} strokeWidth="2" />} /></ToolButton>
              <ToolButton aria-label="Очистить ошибки" disabled><BroomIcon extra={<><circle cx="11.500" cy="11.500" r="4" fill="#8e8e8e" /><path d="M9.500 11.500h4" stroke="#ddd" /></>} /></ToolButton>
            </ToolGroup>
          </DockTools>
          <QueueBox>
            <QueueTable>
              <colgroup>{QUEUE.map(([name, w]) => <col key={name} width={w} />)}<col /></colgroup>
              <thead><tr>{QUEUE.map(([name]) => <QueueHead key={name} scope="col">{name}</QueueHead>)}<QueueHead as="td" /></tr></thead>
            </QueueTable>
          </QueueBox>
        </Dock>
        <DockTabs><DockTab>Очередь сервера</DockTab></DockTabs>
        <StatusBar />
      </Window>
    </Page>
  );
}
